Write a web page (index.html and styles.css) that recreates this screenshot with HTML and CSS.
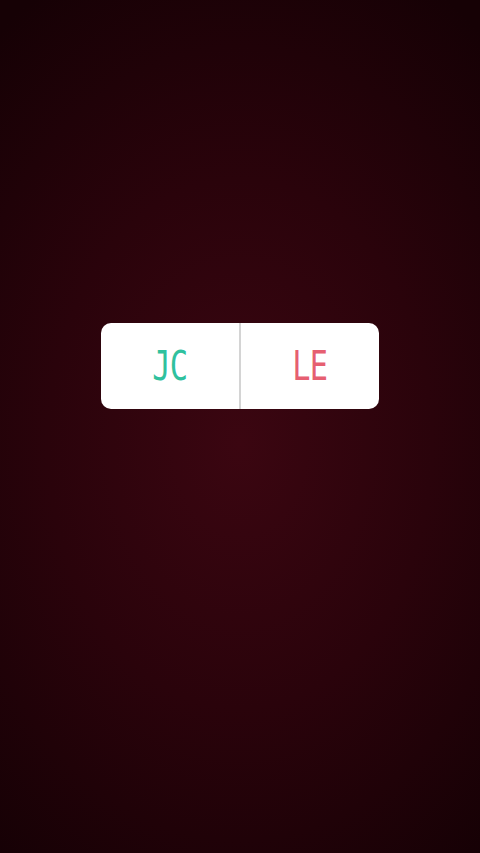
FILE: index.html
```html
<!DOCTYPE html>
<html>
<head>
<meta charset="utf-8">
<link rel="stylesheet" href="styles.css">
</head>
<body>
<main class="screen">
  <div class="poll">
    <div class="option"><span class="label label-jc">JC</span></div>
    <div class="divider"></div>
    <div class="option"><span class="label label-le">LE</span></div>
  </div>
</main>
</body>
</html>
```
FILE: styles.css
```css
html, body {
  margin: 0;
  padding: 0;
  width: 480px;
  height: 853px;
  overflow: hidden;
}
.screen {
  width: 480px;
  height: 853px;
  background: radial-gradient(ellipse 80% 62% at 50% 52%, #3b0611 0%, #2a030b 50%, #160105 100%);
  display: flex;
  justify-content: center;
  padding-top: 323px;
  box-sizing: border-box;
}
.poll {
  width: 278px;
  height: 86px;
  background: #ffffff;
  border-radius: 10px;
  display: flex;
  align-items: stretch;
}
.option {
  flex: 1;
  display: flex;
  align-items: center;
  justify-content: center;
}
.divider {
  width: 2px;
  background: #d4d4d4;
}
.label {
  font-family: "DejaVu Sans Mono", monospace;
  font-size: 41px;
  line-height: 1;
  display: inline-block;
  transform: scaleX(0.74);
  letter-spacing: -1px;
  margin-top: 1px;
}
.label-jc { color: #2fc19e; }
.label-le { color: #e65f71; }
```
